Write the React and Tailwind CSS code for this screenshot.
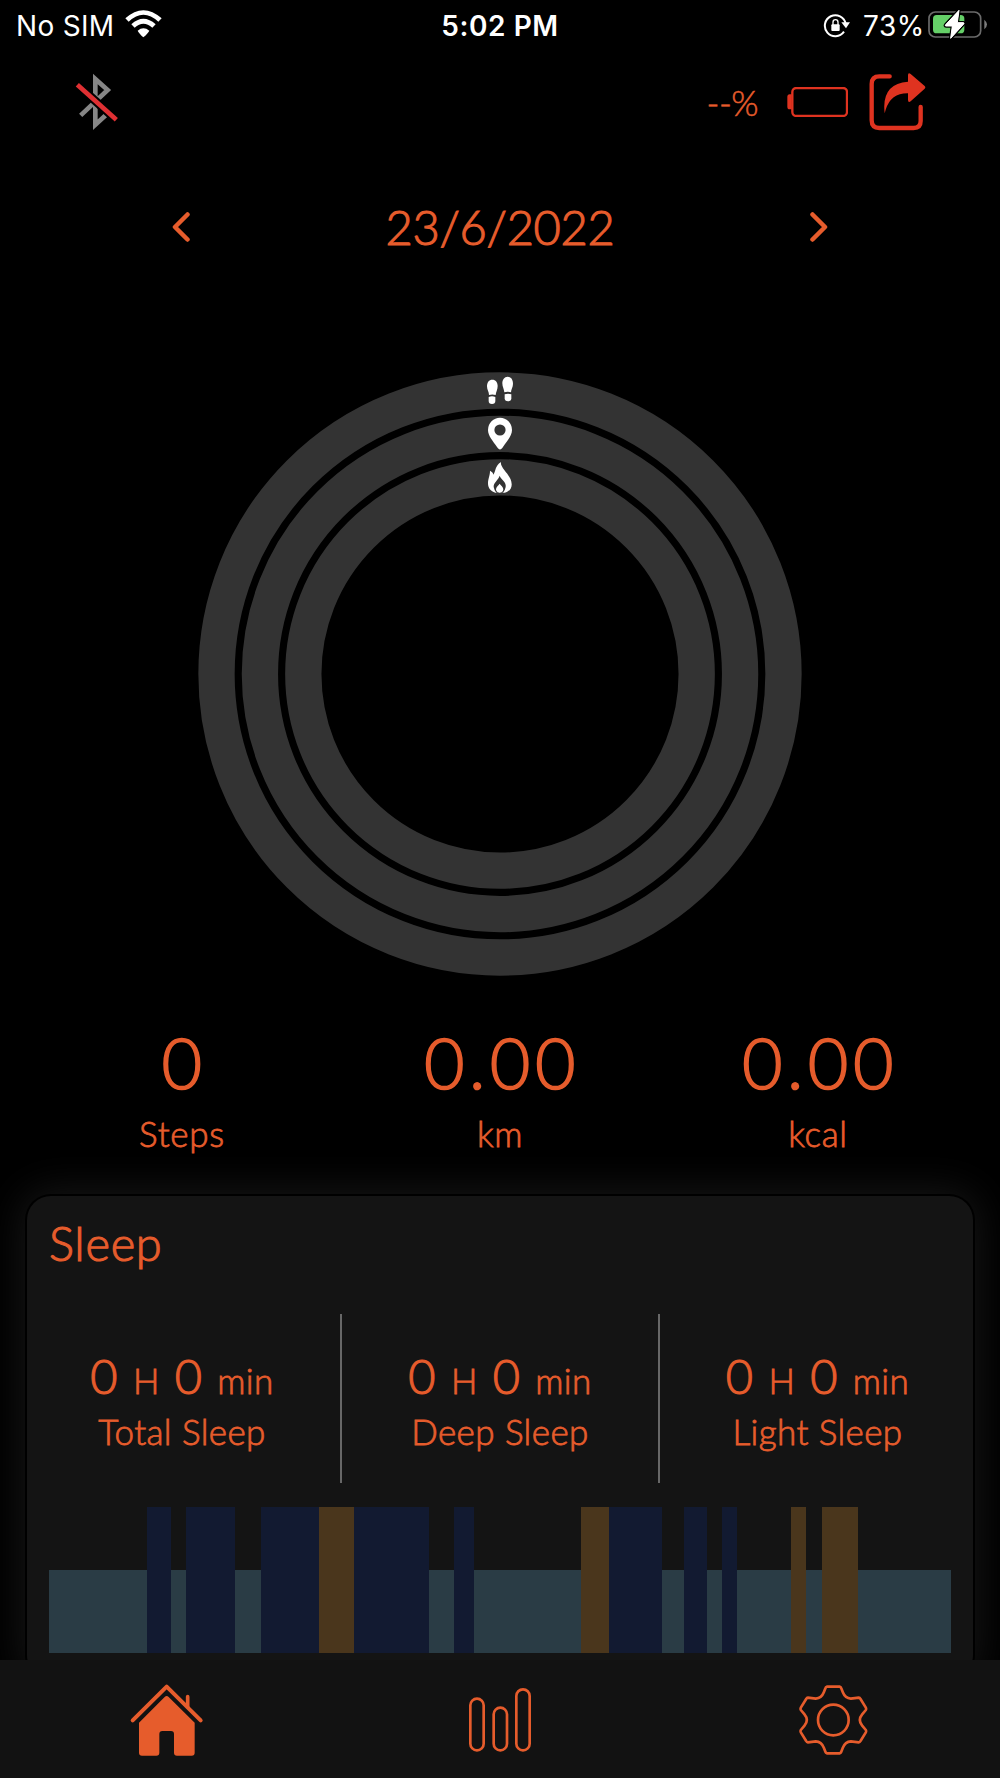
const stats = [
  { value: "0", label: "Steps" },
  { value: "0.00", label: "km" },
  { value: "0.00", label: "kcal" },
];

const sleepStats = ["Total Sleep", "Deep Sleep", "Light Sleep"];

// [stage, end position], the chart starts at 49 and ends at 951
const sleepStages = [
  ["light", 146.5],
  ["deep", 170.5],
  ["light", 186],
  ["deep", 234.6],
  ["light", 261.5],
  ["deep", 319.5],
  ["awake", 354.5],
  ["deep", 428.6],
  ["light", 454.5],
  ["deep", 473.7],
  ["light", 581.5],
  ["awake", 608.7],
  ["deep", 662.4],
  ["light", 684.3],
  ["deep", 706.8],
  ["light", 721.7],
  ["deep", 737.4],
  ["light", 791.5],
  ["awake", 806.2],
  ["light", 822.6],
  ["awake", 858],
  ["light", 951],
];

const stageStyles = {
  light: "h-[82.5px] bg-[#2a3c45]",
  deep: "h-[145.5px] bg-[#121a31]",
  awake: "h-[145.5px] bg-[#4a361c]",
};

const StatusBar = () => (
  <div className="h-[52px] grid grid-cols-3 text-white font-['Inter',sans-serif] font-normal text-[28px] leading-[52px]">
    <div className="flex pl-4">
      <span className="w-[109px] tracking-[0.3px] whitespace-nowrap">No SIM</span>
      <svg className="mt-[10px]" width="37" height="28" viewBox="0 0 111 84">
        <path d="M1 25 Q55 -24 110 25 L100 35 Q55 -7 11 35 Z" fill="white" />
        <path d="M19 43 Q55 10 92 43 L82 53 Q55 30 29 53 Z" fill="white" />
        <path d="M38 62 Q55 48 73 62 Q70 69 55 82 Q41 69 38 62 Z" fill="white" />
      </svg>
    </div>
    <div className="text-center font-semibold tracking-[0.6px]">5:02 PM</div>
    <div className="flex justify-end pr-[12px]">
      <svg className="mt-[13px] mr-[13px]" width="27" height="26" viewBox="0 0 81 78">
        <path d="M63 56 A31.5 31.5 0 1 1 68 32" fill="none" stroke="white" strokeWidth="6" />
        <path d="M55 28 H81 L69 46 Z" fill="white" />
        <rect x="25" y="34" width="25" height="20" rx="3" fill="white" />
        <path d="M30 36 V28 Q30 20 37.5 20 Q45 20 45 28 V36" fill="none" stroke="white" strokeWidth="4" />
      </svg>
      <span className="w-[65px] tracking-[0.5px]">73%</span>
      <svg className="mt-[9px]" width="60" height="31" viewBox="0 0 180 93">
        <rect x="3" y="9" width="155" height="75" rx="19" fill="none" stroke="#6b6b6b" strokeWidth="5" />
        <path d="M169 32 Q177 39 177 46 Q177 54 169 61 Z" fill="#7b7b7b" />
        <rect x="15" y="18" width="94" height="55" rx="11" fill="#65d068" />
        <path
          d="M93 4 L53 47 Q50 51 54 51 H73 L68 88 L107 45 Q110 41 106 41 H88 Z"
          fill="white"
          stroke="black"
          strokeWidth="10"
          strokeLinejoin="round"
          paintOrder="stroke"
        />
        <path
          d="M93 4 L53 47 Q50 51 54 51 H73 L68 88 L107 45 Q110 41 106 41 H88 Z"
          fill="white"
          stroke="white"
          strokeWidth="3"
          strokeLinejoin="round"
        />
      </svg>
    </div>
  </div>
);

const Header = () => (
  <div className="mt-[21px] h-[57px] flex items-center pl-[75px] pr-[73px]">
    <svg width="44" height="58" viewBox="0 0 132 174">
      <path d="M17 127 L98 51 L61 18 V155 L92 127" fill="none" stroke="#868686" strokeWidth="14" />
      <path d="M7 35 L124 140" stroke="black" strokeWidth="26" />
      <path d="M7 35 L124 140" stroke="#df3033" strokeWidth="14" />
    </svg>
    <span className="ml-auto mr-[29px] text-[35px] leading-10 tracking-[-0.6px] [-webkit-text-stroke:0.5px]">
      --%
    </span>
    <svg width="61" height="30" viewBox="0 0 183 90">
      <rect x="16" y="3" width="164" height="84" rx="12" fill="none" stroke="#df3320" strokeWidth="7" />
      <path d="M14 22 V67 H8 Q1 67 1 59 V30 Q1 22 8 22 Z" fill="#df3320" />
    </svg>
    <svg className="ml-[21px]" width="58" height="58" viewBox="0 0 174 174">
      <path
        d="M62 10 H31 Q8 10 8 33 V142 Q8 165 31 165 H134 Q155 165 155 144 V102"
        fill="none"
        stroke="#df3320"
        strokeWidth="13"
        strokeLinecap="round"
      />
      <path
        d="M117 7 Q117 -3 125 3 L167 39 Q171 43 167 47 L125 85 Q117 90 117 80 V61 Q66 60 50 110 L47 121 Q36 32 117 26 Z"
        fill="#df3320"
      />
    </svg>
  </div>
);

const DatePicker = () => (
  <div className="mt-[73px] h-12 flex items-center justify-between px-[172px]">
    <svg width="18" height="30" viewBox="0 0 18 30">
      <path d="M15.5 2.5 L3 15 L15.5 27.5" fill="none" stroke="#e65c2c" strokeWidth="4.5" strokeLinecap="round" strokeLinejoin="round" />
    </svg>
    <span className="text-[47px] leading-[48px] tracking-[-0.3px] [-webkit-text-stroke:1.1px]">23/6/2022</span>
    <svg width="18" height="30" viewBox="0 0 18 30">
      <path d="M2.5 2.5 L15 15 L2.5 27.5" fill="none" stroke="#e65c2c" strokeWidth="4.5" strokeLinecap="round" strokeLinejoin="round" />
    </svg>
  </div>
);

const ActivityRings = () => (
  <svg className="mt-[121px] mx-auto shrink-0" width="604" height="604" viewBox="0 0 604 604">
    <g fill="none" stroke="#333333" strokeWidth="36.3">
      <circle cx="302" cy="302" r="283.5" />
      <circle cx="302" cy="302" r="240.1" />
      <circle cx="302" cy="302" r="196.7" />
    </g>
    {/* steps */}
    <g transform="translate(286 0) scale(0.3333)" fill="white">
      <path d="M15 69 C15 59 9 54 9 43 C9 31 15 23 25 23 C35 23 41 31 41 42 C41 53 36 59 35 69 Q25 66 15 69 Z" />
      <path d="M14 75 Q24 71 34 75 V87 Q34 96 24 96 Q14 96 14 87 Z" />
      <path d="M81 61 C81 51 87 46 87 35 C87 23 81 14 71 14 C61 14 55 23 55 34 C55 45 60 51 61 61 Q71 58 81 61 Z" />
      <path d="M82 67 Q72 63 62 67 V79 Q62 88 72 88 Q82 88 82 79 Z" />
    </g>
    {/* distance */}
    <path
      d="M302 77.5 C301 77.5 300 76.5 299 75 C295 69 290 64 290 58 A12 12.3 0 1 1 314 58 C314 64 309 69 305 75 C304 76.5 303 77.5 302 77.5 Z"
      fill="white"
    />
    <circle cx="302" cy="58" r="5.6" fill="#333333" />
    {/* calories */}
    <g transform="translate(290 90) scale(0.3333)">
      <path d="M39 0 C35 18 70 38 71 66 C72 80 62 90 50 92 H22 C8 88 0 78 0 64 C0 50 6 42 6 26 C13 30 15 33 16 38 C24 28 20 12 39 0 Z" fill="white" />
      <path d="M35 41 C39 53 56 60 53 75 Q51 86 45 92 H25 Q19 86 17 75 C16 62 31 54 35 41 Z" fill="#333333" />
      <path d="M35 65 C38 70 46 74 46 82 Q45 92 35 92 Q25 92 24 82 C24 74 32 70 35 65 Z" fill="white" />
    </g>
  </svg>
);

const SleepCard = () => (
  <div className="mt-[43px] mx-[27px] h-[483px] shrink-0 rounded-[24px] bg-[#141414] shadow-[0_0_0_2px_#000000,0_0_40px_6px_#161616]">
    <h2 className="pt-[23px] pl-[22px] text-[47px] leading-[48px] tracking-[0.7px] [-webkit-text-stroke:1.1px]">Sleep</h2>
    <div className="mt-[47px] ml-[-3px] mr-[-5px] h-[169px] grid grid-cols-3 divide-x-2 divide-[#676767] text-center">
      {sleepStats.map((label) => (
        <div key={label} className="pt-[38px] last:pr-[3px]">
          <div className="text-[35px] leading-[48px] tracking-[0.4px] [word-spacing:5px] [-webkit-text-stroke:0.8px]">
            <span className="text-[47px] [-webkit-text-stroke:1.1px]">0</span> H{" "}
            <span className="text-[47px] [-webkit-text-stroke:1.1px]">0</span> min
          </div>
          <div className="mt-[7px] text-[35px] leading-10 tracking-[0.4px] [-webkit-text-stroke:0.8px]">{label}</div>
        </div>
      ))}
    </div>
    <div className="mt-6 mx-[22px] h-[145.5px] flex items-end">
      {sleepStages.map(([stage, end], i) => {
        const start = i === 0 ? 49 : sleepStages[i - 1][1];
        return <div key={end} className={stageStyles[stage]} style={{ width: end - start }} />;
      })}
    </div>
  </div>
);

const TabBar = () => (
  <nav className="h-[118px] shrink-0 bg-[#121212] grid grid-cols-3 justify-items-center">
    <svg className="mt-[22px] mr-[2px]" width="76" height="76" viewBox="0 0 228 228">
      <path d="M14 115 L116 14 L218 115" fill="none" stroke="#e65c2c" strokeWidth="12" strokeLinecap="round" strokeLinejoin="round" />
      <path d="M179 44 V75" stroke="#e65c2c" strokeWidth="11" strokeLinecap="round" />
      <path
        d="M110 45 Q116 39 122 45 L200 122 V212 Q200 221 191 221 H147 Q138 221 138 212 V156 Q138 147 129 147 H103 Q94 147 94 156 V212 Q94 221 85 221 H42 Q33 221 33 212 V122 Z"
        fill="#e65c2c"
      />
    </svg>
    <svg className="mt-[27px]" width="64" height="66" viewBox="0 0 192 198">
      <g fill="none" stroke="#e65c2c" strokeWidth="8">
        <rect x="7" y="35" width="40" height="155" rx="20" />
        <rect x="77" y="62" width="40" height="128" rx="20" />
        <rect x="145" y="7" width="40" height="183" rx="20" />
      </g>
    </svg>
    <svg className="mt-[23px]" width="71" height="74" viewBox="0 0 212 222">
      <g fill="none" stroke="#e65c2c" strokeWidth="8" strokeLinejoin="round">
        <path d="M86 11 H125 Q128 12 129 15 L134 28 Q141 46 158 47 L182 44 Q185 44 187 48 L203 74 Q205 78 203 81 L192 94 Q178 111 192 128 L203 141 Q205 144 203 148 L187 174 Q185 178 182 178 L158 175 Q141 176 134 194 L129 207 Q128 210 125 211 H86 Q83 210 82 207 L77 194 Q70 176 53 175 L29 178 Q26 178 24 174 L8 148 Q6 144 8 141 L19 128 Q33 111 19 94 L8 81 Q6 78 8 74 L24 48 Q26 44 29 44 L53 47 Q70 46 77 28 L82 15 Q83 12 86 11 Z" />
        <circle cx="105.5" cy="111" r="46" />
      </g>
    </svg>
  </nav>
);

export default function App() {
  return (
    <div className="w-[1000px] h-[1778px] flex flex-col overflow-hidden bg-black text-[#e65c2c] font-['Lato',sans-serif] font-light">
      <main className="flex-1 min-h-0 flex flex-col overflow-hidden">
        <StatusBar />
        <Header />
        <DatePicker />
        <ActivityRings />
        <div className="mt-[50px] mx-[23px] grid grid-cols-3 text-center">
          {stats.map(({ value, label }) => (
            <div key={label}>
              <div className="text-[70px] leading-[72px] tracking-[4.5px] -mr-[4px] [-webkit-text-stroke:1.6px]">{value}</div>
              <div className="mt-[15px] text-[35px] leading-10 tracking-[0.7px] [-webkit-text-stroke:0.8px]">{label}</div>
            </div>
          ))}
        </div>
        <SleepCard />
      </main>
      <TabBar />
    </div>
  );
}
